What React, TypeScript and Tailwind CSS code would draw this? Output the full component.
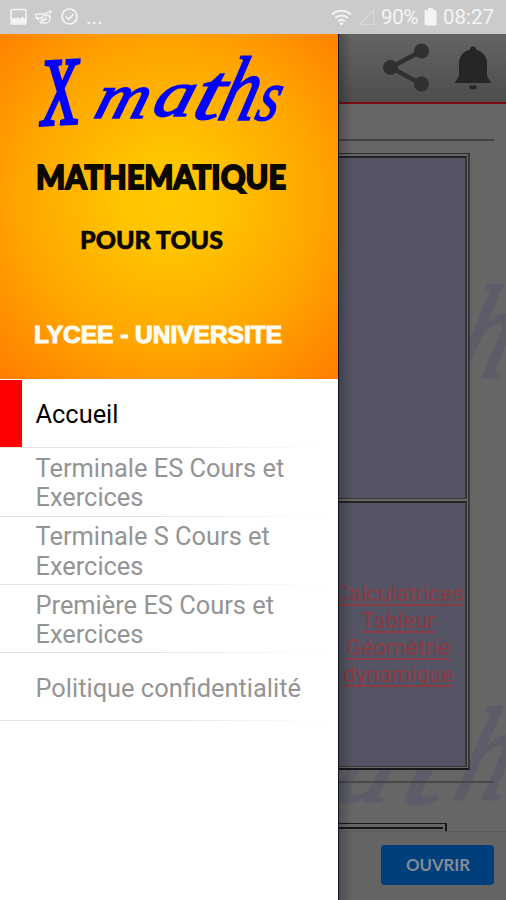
import React from 'react';

const menuItems = [
  { label: 'Accueil', active: true, offset: 'pt-[3px]' },
  { label: 'Terminale ES Cours et Exercices', offset: 'pt-[3px]' },
  { label: 'Terminale S Cours et Exercices', offset: 'pt-[3px]' },
  { label: 'Première ES Cours et Exercices', offset: 'pt-[3px]' },
  { label: 'Politique confidentialité', offset: 'pt-[3px] whitespace-nowrap' },
];

function StatusBar() {
  return (
    <div className="flex h-[34px] shrink-0 items-center justify-between bg-[#cbcbcb] pr-[11px] pl-[10px] text-[#f4f4f4]">
      <div className="flex items-center">
        <svg width="18" height="18" viewBox="0 0 18 18" fill="none" stroke="currentColor">
          <rect x="1" y="1.5" width="15" height="14.5" rx="1" strokeWidth="1.5" />
          <path d="M1.5 15.5V11l2.500-1.500 2 1.500 2-2 2 2 2.500-2 3.500 2.500v4z" fill="currentColor" stroke="none" />
        </svg>
        <svg className="ml-[7px]" width="19" height="18" viewBox="0 0 19 18" fill="none" stroke="currentColor" strokeWidth="1.3">
          <path d="M1 6h9M1 6v4l3 2M1 10h6M4 14l4-2M12 5l5-2M14.500 2l1 4M10 6l3-2" />
          <circle cx="11" cy="11" r="4" />
          <path d="M11 8.500v3h-3M13 7l3 1.500M5 15h5" />
        </svg>
        <svg className="ml-[7px]" width="18" height="18" viewBox="0 0 18 18" fill="none" stroke="currentColor" strokeWidth="1.7">
          <circle cx="8.500" cy="8.500" r="7.500" />
          <path d="M4.800 8.500l2.800 2.800 5-5.200" />
        </svg>
        <span className="ml-[7px] font-['Roboto',sans-serif] text-[21px] leading-[34px]">...</span>
      </div>
      <div className="flex items-center font-['Roboto',sans-serif] text-[20.500px] leading-[34px]">
        <svg width="21" height="17" viewBox="0 0 21 17" fill="none" stroke="currentColor" strokeWidth="2">
          <path d="M1 5.500c5.500-5 13.500-5 19 0M4.200 9c3.600-3.300 9-3.300 12.600 0M7.200 12.200c2-1.700 4.600-1.700 6.600 0" />
          <circle cx="10.500" cy="14.500" r="1.600" fill="currentColor" stroke="none" />
        </svg>
        <svg className="ml-[7px] text-[#d8d8d8]" width="16" height="18" viewBox="0 0 16 18" fill="none" stroke="currentColor" strokeWidth="1.200">
          <path d="M1 16.500L15 1.500v15z" />
        </svg>
        <span className="ml-[6px] w-[39px] tracking-[-0.3px]">90%</span>
        <svg className="ml-[4px]" width="13" height="18" viewBox="0 0 13 18" fill="currentColor">
          <path d="M4 0h5v2h2.500a1 1 0 0 1 1 1v13.500a1 1 0 0 1-1 1h-10a1 1 0 0 1-1-1V3a1 1 0 0 1 1-1H4z" />
        </svg>
        <span className="ml-[6px] w-[52px] whitespace-nowrap">08:27</span>
      </div>
    </div>
  );
}

function Banner() {
  return (
    <div className="h-[345px] shrink-0 bg-[radial-gradient(circle_at_50%_48%,#ffca00_0%,#ffc400_20%,#ffa400_62%,#ff7d00_100%)]">
      <svg width="338" height="345" viewBox="0 0 338 345">
        <g fill="#0000ff" stroke="#0000ff" strokeWidth="1.600" fontStyle="italic" fontFamily="'Liberation Serif', serif">
          <text transform="translate(42 91) rotate(-3) scale(0.66 1)" fontSize="96" fontWeight="normal" strokeWidth="3.500">X</text>
          <g transform="translate(92 84) skewX(-16)">
            <text transform="scale(1.15 1)" fontSize="64">m</text>
            <text transform="translate(58 -2) scale(1.2 1)" fontSize="66">a</text>
            <text transform="translate(98 1) scale(1.25 1)" fontSize="80">t</text>
            <text transform="translate(124 2) scale(0.8 1)" fontSize="92">h</text>
            <text transform="translate(162 2) scale(0.78 1)" fontSize="72">s</text>
          </g>
        </g>
        <g fill="#0a0800" stroke="#0a0800" fontFamily="Lato, sans-serif" fontWeight="900">
          <text x="36" y="155" fontSize="33" strokeWidth="1.8" textLength="250" lengthAdjust="spacingAndGlyphs">MATHEMATIQUE</text>
          <text x="80" y="214.500" fontSize="25" strokeWidth="0.6" textLength="143" lengthAdjust="spacing">POUR TOUS</text>
        </g>
        <text x="34" y="309" fill="#fffdf5" stroke="#fffdf5" strokeWidth="1.100" fontFamily="'Liberation Sans', sans-serif" fontWeight="bold" fontSize="23" textLength="248" lengthAdjust="spacingAndGlyphs">LYCEE - UNIVERSITE</text>
      </svg>
    </div>
  );
}

function Drawer() {
  return (
    <aside className="flex w-[338px] shrink-0 flex-col bg-white">
      <Banner />
      <nav className="flex flex-col pt-[1px]">
        {menuItems.map((item) => (
          <div key={item.label} className="flex h-[68.300px] flex-col">
            <div className="flex flex-1">
              <div className={item.active ? 'w-[21.500px] bg-[#ff0000]' : 'w-[21.500px]'} />
              <a
                className={`flex flex-1 items-center pl-[14px] pr-6 font-['Roboto',sans-serif] text-[25.400px] leading-[29.500px] ${
                  item.active ? 'text-black' : 'text-[#949494]'
                }`}
              >
                <span className={item.offset}>{item.label}</span>
              </a>
            </div>
            <div className="h-px w-[322px] bg-linear-to-r from-[#e4e4e4] from-50% to-white" />
          </div>
        ))}
      </nav>
    </aside>
  );
}

function Watermark({ className }: { className: string }) {
  return (
    <svg className={className} width="168" height="150" viewBox="0 0 168 150">
      <g transform="translate(0 100) skewX(-16)" fontFamily="'Liberation Serif', serif" fontStyle="italic" fill="#5d5d69" stroke="#5d5d69" strokeWidth="3">
        <text transform="translate(-6 -2) scale(1.2 1)" fontSize="92">a</text>
        <text transform="translate(60 0) scale(1.3 1)" fontSize="112">t</text>
        <text transform="translate(112 -4) scale(0.78 1)" fontSize="132">h</text>
      </g>
    </svg>
  );
}

function Page() {
  return (
    <main className="relative isolate flex w-[168px] shrink-0 flex-col overflow-hidden bg-[#666666]">
      <Watermark className="absolute top-[247px] left-0 -z-10" />
      <Watermark className="absolute top-[669px] left-0 -z-10" />

      <header className="flex h-[70px] shrink-0 border-b-2 border-[#7b0710] bg-linear-to-b from-[#646464] to-[#4d4d4d]">
        <svg width="168" height="68" viewBox="0 0 168 68" fill="#303030">
          <path d="M83.500 17L52.500 33.500l31 16.500" fill="none" stroke="#303030" strokeWidth="4.500" />
          <circle cx="52.500" cy="33.500" r="7.500" />
          <circle cx="83.500" cy="17" r="7.500" />
          <circle cx="83.500" cy="50" r="7.500" />
          <path fill="#262626" d="M135 12.500a3 3 0 0 1 3 3c7 2 11 7 11 14v11c0 3 2 5 4.500 8.500h-37c2.500-3.500 4.500-5.500 4.500-8.500v-11c0-7 4-12 11-14a3 3 0 0 1 3-3zM131 51.500h8a4 4 0 0 1-8 0z" />
        </svg>
      </header>

      <div className="mt-[35px] mr-3 h-[1.500px] shrink-0 bg-[#424242]" />

      {/* table des outils */}
      <div className="mt-[12.500px] flex h-[617px] w-[131.500px] shrink-0 flex-col gap-[2px] border-t border-r-2 border-b-2 border-t-[#292929] border-r-[#383838] border-b-[#181818] bg-[#666666] pt-[2px] pr-[1px] pb-[1px]">
        <div className="h-[343px] shrink-0 border-t-2 border-r-2 border-b border-[#363636] border-t-[#202028] bg-[#555464]" />
        <div className="flex flex-1 justify-center border-t-2 border-r-2 border-b border-[#363636] border-t-[#242424] bg-[#555464] pt-[77px]">
          <p className="-ml-[6px] w-[128px] text-center font-['Roboto',sans-serif] text-[22.500px] leading-[27px] whitespace-nowrap text-[#8b3a42] underline decoration-2 underline-offset-[3px] [text-decoration-skip-ink:none]">
            <span>Calculatrices</span>
            <br />
            Tableur
            <br />
            Géométrie
            <br />
            dynamique
          </p>
        </div>
      </div>

      <div className="mt-[11px] mr-3 h-[1.500px] shrink-0 bg-[#484848]" />
      <div className="mt-[40px] flex h-[8px] w-[108.500px] shrink-0 border-t border-r-2 border-[#171717] pt-[3px] pr-[2px]">
        <div className="flex-1 border-t-2 border-[#171717]" />
      </div>

      <footer className="flex flex-1 items-start justify-end border-t border-[#5c5c5c] bg-[#646464] pt-[13px] pr-[12px]">
        <button className="h-[40px] w-[113px] rounded-[4px] bg-[#003f7b] pl-[1px] font-['Lato',sans-serif] text-[16.800px] font-bold text-[#858b92]">OUVRIR</button>
      </footer>

      {/* ombre portée du menu */}
      <div className="absolute inset-y-0 left-0 w-[14px] bg-linear-to-r from-black/25 to-transparent" />
      <div className="absolute inset-y-0 left-0 w-px bg-[#101426]" />
    </main>
  );
}

export default function App() {
  return (
    <div className="flex h-[900px] w-[506px] flex-col overflow-hidden bg-white">
      <StatusBar />
      <div className="flex min-h-0 flex-1">
        <Drawer />
        <Page />
      </div>
    </div>
  );
}
